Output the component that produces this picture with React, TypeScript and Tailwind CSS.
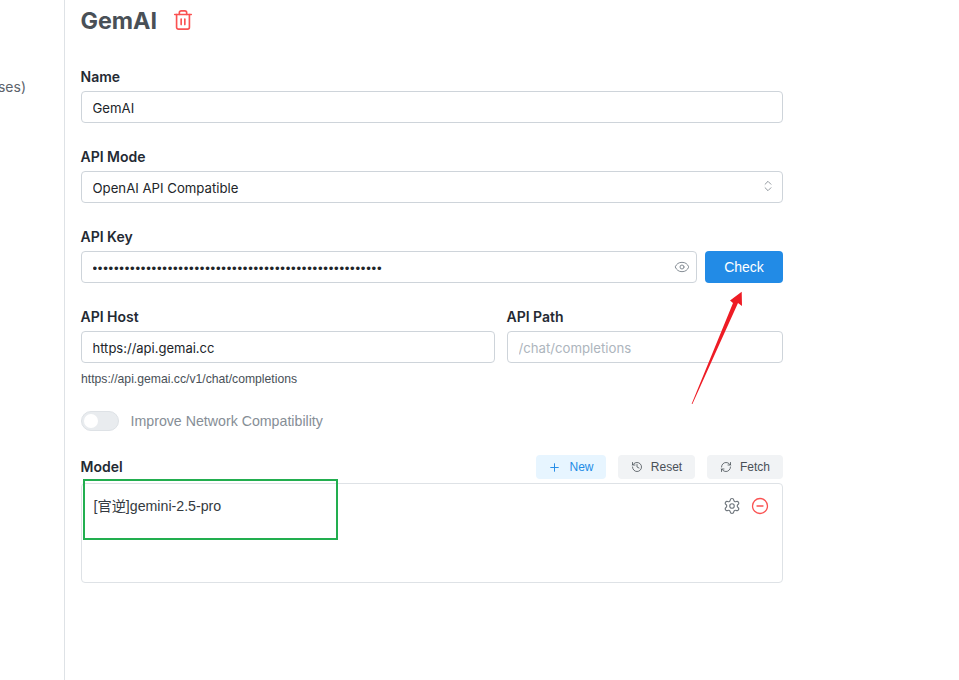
import { Trash2, Eye, ChevronsUpDown, Plus, History, RefreshCw, Settings, CircleMinus } from "lucide-react";

const inter = "font-['Inter','Noto_Sans_CJK_SC',sans-serif]";
const arial = "font-['Liberation_Sans','Noto_Sans_CJK_SC',sans-serif]";
const label = `-ml-[0.5px] text-[14px] leading-5 font-semibold text-[#242a33] h-5 ${inter}`;
const shell = "h-8 w-full rounded-[4px] border border-[#ced4da] bg-white pl-[10.5px] pr-[11px] pt-[2px] text-[#212529] outline-none";
const box = `${shell} text-[13.2px]`;

function Field({ name, children }: { name: string; children: React.ReactNode }) {
  return (
    <div className="flex flex-col gap-1">
      <div className={label}>{name}</div>
      {children}
    </div>
  );
}

export default function App() {
  return (
    <div className={`relative h-[680px] w-[959px] overflow-hidden bg-white flex ${inter}`}>
      <aside className="w-[65px] shrink-0 border-r border-[#dee2e6] overflow-hidden flex justify-end pr-[38px] pt-[77px]">
        <span className="text-[14px] leading-5 text-[#5c636b] whitespace-nowrap">ses)</span>
      </aside>
      <main className="w-[702px] ml-4 flex flex-col">
        <div className="flex items-center gap-4 h-[42px] mb-6">
          <h1 className="-ml-[0.5px] text-[23.3px] leading-[42px] font-bold text-[#495057]">GemAI</h1>
          <Trash2 size={22} strokeWidth={1.8} className="text-[#fa5252] -mt-[3px] -ml-[1px]" />
        </div>
        <div className="flex flex-col gap-6 pt-[1px]">
          <Field name="Name">
            <input readOnly value="GemAI" className={box} />
          </Field>
          <Field name="API Mode">
            <div className="relative">
              <input readOnly value="OpenAI API Compatible" className={box} />
              <ChevronsUpDown size={14} strokeWidth={1.4} className="absolute right-[8px] top-[8px] text-[#7b8289]" />
            </div>
          </Field>
          <Field name="API Key">
            <div className="flex gap-2 w-full">
              <div className="relative flex-1">
                <input readOnly type="password" value="sk-xxxxxxxxxxxxxxxxxxxxxxxxxxxxxxxxxxxxxxxxxxxxxxxxxxx" className={`${box} ${arial} tracking-[0.75px]`} />
                <Eye size={16} strokeWidth={1.5} className="absolute right-[7px] top-2 text-[#868e96]" />
              </div>
              <button className={`h-8 w-[78px] rounded-[4px] bg-[#228be6] text-white text-[14px] ${arial}`}>Check</button>
            </div>
          </Field>
          <div className="flex gap-3">
            <div className="w-[414px]">
              <Field name="API Host">
                <input readOnly value="https://api.gemai.cc" className={`${shell} text-[13px]`} />
              </Field>
            </div>
            <div className="flex-1">
              <Field name="API Path">
                <input readOnly placeholder="/chat/completions" className={`${box} placeholder:text-[#adb5bd]`} />
              </Field>
            </div>
          </div>
        </div>
        <div className={`mt-[9px] h-[15px] text-[12.2px] leading-[15px] text-[#495057] ${arial}`}>https://api.gemai.cc/v1/chat/completions</div>
        <div className="mt-[24px] flex items-center gap-3 h-5">
          <div className="relative h-5 w-[38px] rounded-full border border-[#dee2e6] bg-[#e9ecef]">
            <div className="absolute left-[2px] top-[2px] h-[14px] w-[14px] rounded-full bg-white" />
          </div>
          <span className={`pt-[1px] -ml-[0.5px] text-[14.2px] text-[#868e96] ${arial}`}>Improve Network Compatibility</span>
        </div>
        <div className="mt-6 flex items-center justify-between h-6">
          <div className={label}>Model</div>
          <div className={`flex gap-3 text-[12px] ${arial}`}>
            <button className="h-6 w-[70px] rounded-[4px] bg-[#e7f5ff] text-[#228be6] flex items-center justify-center gap-2 font-medium">
              <Plus size={13} strokeWidth={1.8} />New
            </button>
            <button className="h-6 w-[77px] rounded-[4px] bg-[#f1f3f5] text-[#495057] flex items-center justify-center gap-2">
              <History size={12} strokeWidth={1.6} />Reset
            </button>
            <button className="h-6 w-[76px] rounded-[4px] bg-[#f1f3f5] text-[#495057] flex items-center justify-center gap-2">
              <RefreshCw size={12} strokeWidth={1.6} />Fetch
            </button>
          </div>
        </div>
        <div className="mt-1 h-[100px] rounded-[4px] border border-[#dee2e6] pl-[11.5px] pr-3 pt-3 flex items-start justify-between">
          <span className={`text-[14.2px] leading-5 text-[#343a40] ${arial}`}>[官逆]gemini-2.5-pro</span>
          <div className="flex items-center gap-[10px] pr-[1px] pt-[1px]">
            <Settings size={18} strokeWidth={1.5} className="text-[#6f767d]" />
            <CircleMinus size={18} strokeWidth={1.7} className="text-[#fa5252]" />
          </div>
        </div>
      </main>
      <div className="absolute left-[83px] top-[479px] h-[61px] w-[255px] border-2 border-[#22ae4f]" />
      <svg className="absolute left-0 top-0 pointer-events-none" width="959" height="680" viewBox="0 0 959 680">
        <polygon points="691.6,404 692.4,404 738,303 742,306 741.7,291.7 730,300.5 733,303" fill="#ee1c25" />
      </svg>
    </div>
  );
}
